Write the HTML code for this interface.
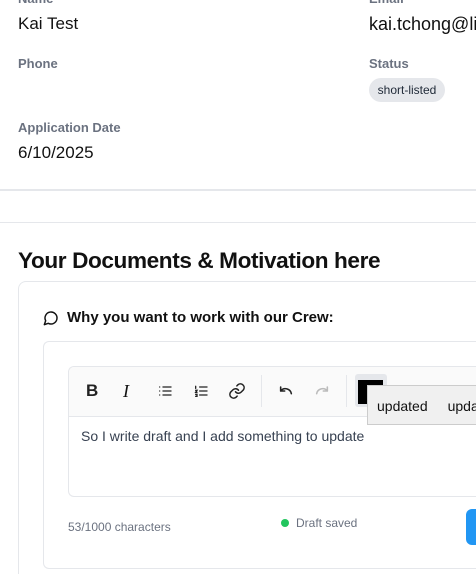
<!DOCTYPE html>
<html><head><meta charset="utf-8"><style>
*{box-sizing:border-box;margin:0;padding:0}
html,body{width:476px;height:574px;overflow:hidden}
body{background:#fff;font-family:"Liberation Sans",sans-serif;position:relative;color:#111}
.a{position:absolute;white-space:nowrap}
.lbl{font-size:13px;font-weight:bold;color:#6b7280}
.val{font-size:17px;color:#111}
svg{position:absolute}
</style></head><body>
<div class="a lbl" style="left:18px;top:-9px">Name</div>
<div class="a lbl" style="left:369px;top:-9px">Email</div>
<div class="a val" style="left:18px;top:14px">Kai Test</div>
<div class="a val" style="left:369px;top:14px;font-size:18px">kai.tchong@li</div>
<div class="a lbl" style="left:18px;top:56px">Phone</div>
<div class="a lbl" style="left:369px;top:56px">Status</div>
<div class="a" style="left:369px;top:78px;width:76px;height:24px;border-radius:12px;background:#e5e7eb;font-size:12px;line-height:24px;text-align:center;color:#1f2937">short-listed</div>
<div class="a lbl" style="left:18px;top:120px">Application Date</div>
<div class="a val" style="left:18px;top:143px">6/10/2025</div>
<div class="a" style="left:0;top:189px;width:476px;height:2px;background:#e5e7eb"></div>
<div class="a" style="left:0;top:222px;width:476px;height:1px;background:#e5e7eb"></div>
<div class="a" style="left:18px;top:248px;font-size:22.6px;font-weight:bold;letter-spacing:-0.4px">Your Documents &amp; Motivation here</div>
<div class="a" style="left:18px;top:281px;width:458px;height:293px;border:1px solid #e5e7eb;border-right:none;border-bottom:none;border-radius:8px 0 0 0"></div>
<svg style="left:43px;top:310px" width="16" height="16" viewBox="0 0 24 24" fill="none" stroke="#111" stroke-width="2.2" stroke-linecap="round" stroke-linejoin="round"><path d="M7.9 20A9 9 0 1 0 4 16.1L2 22Z"/></svg>
<div class="a" style="left:67px;top:309px;font-size:15px;font-weight:bold">Why you want to work with our Crew:</div>
<div class="a" style="left:43px;top:341px;width:433px;height:228px;border:1px solid #e5e7eb;border-right:none;border-radius:6px 0 0 6px"></div>
<div class="a" style="left:68px;top:366px;width:408px;height:131px;border:1px solid #e5e7eb;border-right:none;border-radius:6px 0 0 6px;overflow:hidden">
<div style="height:50px;background:#fafafa;border-bottom:1px solid #e5e7eb"></div></div>
<div class="a" style="left:86px;top:381px;font-size:17px;font-weight:bold;color:#222">B</div>
<div class="a" style="left:123px;top:381px;font-size:18px;font-style:italic;font-family:'Liberation Serif',serif">I</div>
<svg style="left:157px;top:383px" width="16" height="16" viewBox="0 0 24 24" fill="none" stroke="#222" stroke-width="2" stroke-linecap="round"><path d="M9 6h12M9 12h12M9 18h12M4 6h.01M4 12h.01M4 18h.01"/></svg>
<svg style="left:193px;top:383px" width="16" height="16" viewBox="0 0 24 24" fill="none" stroke="#222" stroke-width="2" stroke-linecap="round"><path d="M10 6h11M10 12h11M10 18h11M4 5v3M4 11h2l-2 3h2M4 17h2v3H4"/></svg>
<svg style="left:228px;top:382px" width="18" height="18" viewBox="0 0 24 24" fill="none" stroke="#222" stroke-width="2" stroke-linecap="round"><path d="M10 13a5 5 0 0 0 7.5.5l3-3a5 5 0 0 0-7-7l-1.7 1.7M14 11a5 5 0 0 0-7.5-.5l-3 3a5 5 0 0 0 7 7l1.7-1.7"/></svg>
<div class="a" style="left:261px;top:375px;width:1px;height:32px;background:#e5e7eb"></div>
<svg style="left:277px;top:383px" width="18" height="16" viewBox="0 0 24 24" fill="none" stroke="#222" stroke-width="2.4" stroke-linecap="round" stroke-linejoin="round"><path d="M4 6v6h6M4 12a9 9 0 0 1 16 4"/></svg>
<svg style="left:313px;top:383px" width="18" height="16" viewBox="0 0 24 24" fill="none" stroke="#bbb" stroke-width="2.4" stroke-linecap="round" stroke-linejoin="round"><path d="M20 6v6h-6M20 12a9 9 0 0 0-16 4"/></svg>
<div class="a" style="left:346px;top:375px;width:1px;height:32px;background:#e5e7eb"></div>
<div class="a" style="left:355px;top:374px;width:32px;height:33px;background:#e5e7eb;border-radius:3px"></div>
<div class="a" style="left:358px;top:380px;width:25px;height:24px;background:#000"></div>
<div class="a" style="left:367px;top:385px;width:109px;height:40px;background:#f0f0f0;border:1px solid #ccc;border-right:none;font-size:14px;line-height:40px;padding-left:9px;color:#111;overflow:hidden">updated<span style="margin-left:20px">upda</span></div>
<div class="a" style="left:81px;top:428px;font-size:14px;color:#374151">So I write draft and I add something to update</div>
<div class="a" style="left:68px;top:520px;font-size:12px;color:#6b7280">53/1000 characters</div>
<div class="a" style="left:281px;top:519px;width:8px;height:8px;border-radius:50%;background:#22c55e"></div>
<div class="a" style="left:296px;top:516px;font-size:12px;color:#6b7280">Draft saved</div>
<div class="a" style="left:466px;top:509px;width:10px;height:36px;border-radius:6px 0 0 6px;background:#2196f3"></div>
</body></html>
